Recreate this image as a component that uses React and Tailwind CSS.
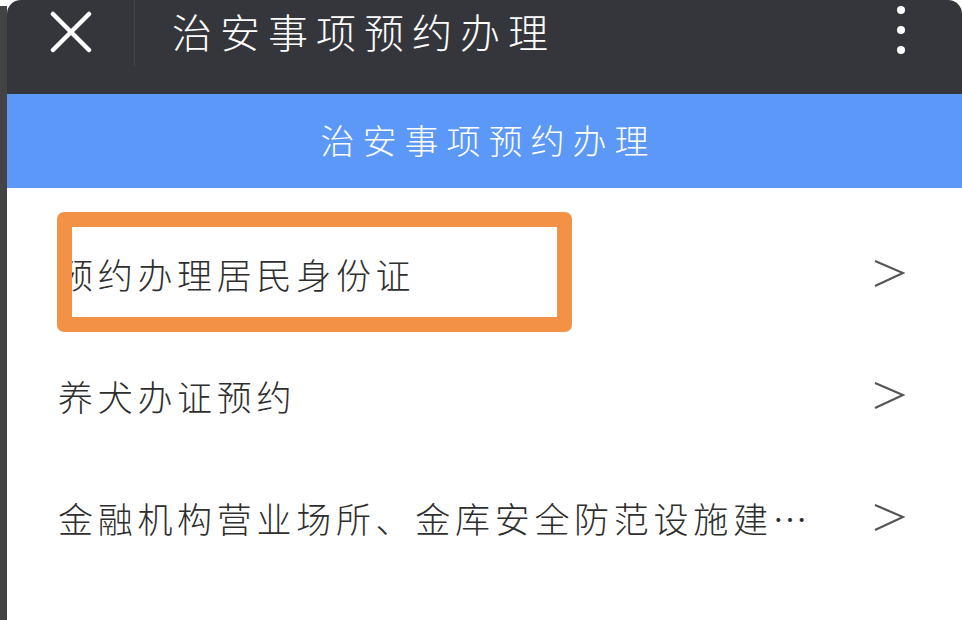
import React from "react";

const cjk = { fontFamily: '"Noto Sans CJK SC", "Noto Sans", sans-serif' };

const items = [
  "预约办理居民身份证",
  "养犬办证预约",
  "金融机构营业场所、金库安全防范设施建…",
];

function Chevron() {
  return (
    <svg width="32" height="30" viewBox="0 0 32 30" fill="none" className="shrink-0">
      <path d="M2 2 L30 14 L2 27" stroke="#555" strokeWidth="2.2" strokeLinejoin="miter" />
    </svg>
  );
}

export default function App() {
  return (
    <div className="w-[962px] h-[620px] bg-white flex overflow-hidden" style={cjk}>
      {/* background strip behind the phone window */}
      <div className="w-[7px] mt-[6px] bg-[#434345] shrink-0" />

      <div className="flex-1 flex flex-col rounded-t-[14px] overflow-hidden">
        {/* top app bar */}
        <div className="h-[94px] bg-[#35363b] flex items-start shrink-0">
          <div className="w-[128px] h-[66px] flex items-center justify-center border-r border-[#47484d]">
            <svg width="42" height="42" viewBox="0 0 42 42" className="-mt-[2px]">
              <path d="M3 3 L39 39 M39 3 L3 39" stroke="#fff" strokeWidth="4.5" strokeLinecap="round" />
            </svg>
          </div>
          <h1 className="ml-[37px] mt-[7px] text-[40px] leading-[48px] tracking-[8px] text-white font-light">
            治安事项预约办理
          </h1>
          <div className="ml-auto mr-[57px] mt-[6px] flex flex-col gap-[12px]">
            <span className="w-[8px] h-[8px] rounded-full bg-white" />
            <span className="w-[8px] h-[8px] rounded-full bg-white" />
            <span className="w-[8px] h-[8px] rounded-full bg-white" />
          </div>
        </div>

        {/* page header */}
        <div className="h-[94px] bg-[#5c98f8] flex items-center justify-center shrink-0">
          <h2 className="text-[34px] leading-[40px] tracking-[8px] text-white pl-[8px] font-light -mt-[2px]">
            治安事项预约办理
          </h2>
        </div>

        {/* list */}
        <div className="pt-[25px] flex flex-col">
          {items.map((t, i) => (
            <div key={i} className="relative h-[122px] flex items-center pl-[51px] pr-[57px]">
              <span className="text-[35px] leading-[44px] tracking-[4.7px] text-[#2e2e2e] whitespace-nowrap font-light">
                {t}
              </span>
              <span className="ml-auto">
                <Chevron />
              </span>
              {i === 0 && (
                <div className="absolute left-[50px] top-[-1px] w-[515px] h-[120px] border-[15px] border-[#f39247] rounded-[7px]" />
              )}
            </div>
          ))}
        </div>
      </div>
    </div>
  );
}
